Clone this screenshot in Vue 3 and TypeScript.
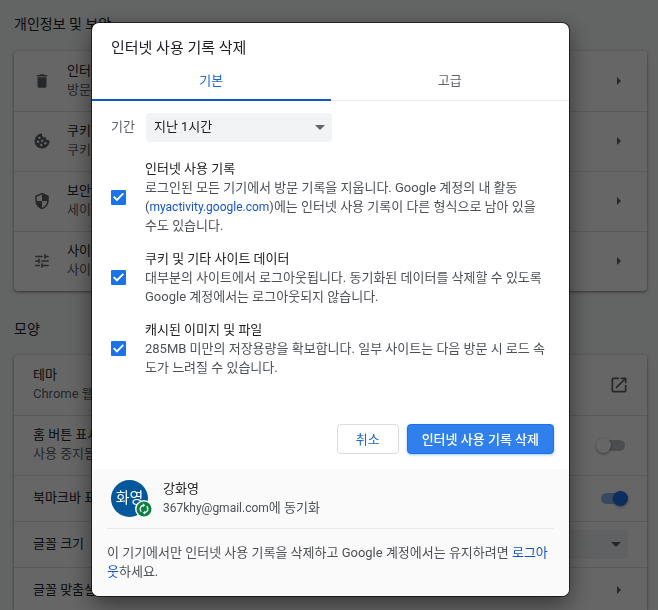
<script setup lang="ts">
import { ref } from 'vue'

type IconName = 'trash' | 'cookie' | 'shield' | 'tune'

interface PrivacyRow {
  icon: IconName
  title: string
  sub: string
}

const privacyRows: PrivacyRow[] = [
  { icon: 'trash', title: '인터넷 사용 기록 삭제', sub: '방문 기록, 쿠키, 캐시 등을 삭제합니다.' },
  { icon: 'cookie', title: '쿠키 및 기타 사이트 데이터', sub: '쿠키가 허용됨' },
  { icon: 'shield', title: '보안', sub: '세이프 브라우징 및 기타 보안 설정' },
  { icon: 'tune', title: '사이트 설정', sub: '사이트에서 사용할 수 있는 정보 관리' },
]

const period = ref('지난 1시간')
const periods = ['지난 1시간', '지난 24시간', '지난 7일', '지난 4주', '전체 기간']
const homeButton = ref(false)
const bookmarkBar = ref(true)
const history = ref(true)
const cookies = ref(true)
const cache = ref(true)
</script>

<template>
  <div class="page">
    <main class="settings">
      <h2 class="section-title">개인정보 및 보안</h2>
      <div class="card">
        <button v-for="row in privacyRows" :key="row.icon" type="button" class="row">
          <svg class="row-icon" viewBox="0 0 24 24" aria-hidden="true">
            <path v-if="row.icon === 'trash'" d="M6 19c0 1.1.9 2 2 2h8c1.1 0 2-.9 2-2V7H6v12zM19 4h-3.5l-1-1h-5l-1 1H5v2h14V4z" />
            <g v-else-if="row.icon === 'cookie'">
              <path d="M21.6 11.06a1 1 0 0 0-.86-.17A2.94 2.94 0 0 1 20 11c-1.65 0-3-1.35-3-2.94l.01-.17a1 1 0 0 0-1.25-1A2.96 2.96 0 0 1 15 7c-1.65 0-3-1.35-3-3 0-.22.03-.44.1-.72a1 1 0 0 0-1.07-1.23A9.96 9.96 0 0 0 2 12c0 5.51 4.49 10 10 10s10-4.49 10-10v-.16a1 1 0 0 0-.4-.78z" />
              <g fill="#fff">
                <circle cx="8.5" cy="7.8" r="1.6" />
                <circle cx="6.8" cy="13" r="1.6" />
                <circle cx="12.3" cy="11.8" r="1.6" />
                <circle cx="11" cy="17.3" r="1.6" />
                <circle cx="16.6" cy="15" r="1.6" />
              </g>
            </g>
            <path v-else-if="row.icon === 'shield'" d="M12 1L3 5v6c0 5.55 3.84 10.74 9 12 5.16-1.26 9-6.45 9-12V5l-9-4zm0 10.99h7c-.53 4.12-3.28 7.79-7 8.94V12H5V6.3l7-3.11v8.8z" />
            <path v-else d="M3 17v2h6v-2H3zM3 5v2h10V5H3zm10 16v-2h8v-2h-8v-2h-2v6h2zM7 9v2H3v2h4v2h2V9H7zm14 4v-2H11v2h10zm-6-4h2V7h4V5h-4V3h-2v6z" />
          </svg>
          <span class="row-text">
            <span class="row-title">{{ row.title }}</span>
            <span class="row-sub">{{ row.sub }}</span>
          </span>
          <span class="end"><svg class="caret" viewBox="0 0 4 8" aria-hidden="true"><path d="M0 0l4 4-4 4z" /></svg></span>
        </button>
      </div>

      <h2 class="section-title second">모양</h2>
      <div class="card">
        <a class="row" href="#theme">
          <span class="row-text">
            <span class="row-title">테마</span>
            <span class="row-sub">Chrome 웹 스토어 열기</span>
          </span>
          <span class="end">
            <svg class="open-icon" viewBox="0 0 24 24" aria-hidden="true"><path d="M19 19H5V5h7V3H5a2 2 0 0 0-2 2v14a2 2 0 0 0 2 2h14c1.1 0 2-.9 2-2v-7h-2v7zM14 3v2h3.59l-9.83 9.83 1.41 1.41L19 6.41V10h2V3h-7z" /></svg>
          </span>
        </a>
        <label class="row">
          <span class="row-text">
            <span class="row-title">홈 버튼 표시</span>
            <span class="row-sub">사용 중지됨</span>
          </span>
          <input v-model="homeButton" class="switch" type="checkbox" role="switch" />
        </label>
        <label class="row short">
          <span class="row-text"><span class="row-title">북마크바 표시</span></span>
          <input v-model="bookmarkBar" class="switch" type="checkbox" role="switch" />
        </label>
        <div class="row short">
          <label class="row-text" for="font-size"><span class="row-title">글꼴 크기</span></label>
          <span class="select-wrap">
            <select id="font-size"><option>중간(권장)</option></select>
            <svg class="drop" viewBox="0 0 10 5" aria-hidden="true"><path d="M0 0h10L5 5z" /></svg>
          </span>
        </div>
        <button type="button" class="row short">
          <span class="row-text"><span class="row-title">글꼴 맞춤설정</span></span>
          <span class="end"><svg class="caret" viewBox="0 0 4 8" aria-hidden="true"><path d="M0 0l4 4-4 4z" /></svg></span>
        </button>
      </div>
    </main>

    <div class="overlay">
      <section class="dialog" role="dialog" aria-modal="true" aria-labelledby="dialog-title">
        <h1 id="dialog-title" class="dialog-title">인터넷 사용 기록 삭제</h1>
        <div class="tabs" role="tablist">
          <button type="button" role="tab" aria-selected="true" class="tab active">기본</button>
          <button type="button" role="tab" aria-selected="false" class="tab">고급</button>
        </div>

        <div class="body">
          <div class="period">
            <label for="period">기간</label>
            <span class="select-wrap period-select">
              <select id="period" v-model="period">
                <option v-for="p in periods" :key="p">{{ p }}</option>
              </select>
              <svg class="drop" viewBox="0 0 10 5" aria-hidden="true"><path d="M0 0h10L5 5z" /></svg>
            </span>
          </div>

          <div class="items">
            <div class="item">
              <input id="history" v-model="history" class="check" type="checkbox" />
              <div class="item-text">
                <label for="history">인터넷 사용 기록</label>
                <p>로그인된 모든 기기에서 방문 기록을 지웁니다. Google 계정의 내 활동(<a class="address" href="#myactivity">myactivity.google.com</a>)에는 인터넷 사용 기록이 다른 형식으로 남아 있을 수도 있습니다.</p>
              </div>
            </div>
            <div class="item">
              <input id="cookies" v-model="cookies" class="check" type="checkbox" />
              <div class="item-text">
                <label for="cookies">쿠키 및 기타 사이트 데이터</label>
                <p>대부분의 사이트에서 로그아웃됩니다. 동기화된 데이터를 삭제할 수 있도록 Google 계정에서는 로그아웃되지 않습니다.</p>
              </div>
            </div>
            <div class="item">
              <input id="cache" v-model="cache" class="check" type="checkbox" />
              <div class="item-text">
                <label for="cache">캐시된 이미지 및 파일</label>
                <p>285MB 미만의 저장용량을 확보합니다. 일부 사이트는 다음 방문 시 로드 속도가 느려질 수 있습니다.</p>
              </div>
            </div>
          </div>
        </div>

        <div class="actions">
          <button type="button" class="btn">취소</button>
          <button type="button" class="btn primary">인터넷 사용 기록 삭제</button>
        </div>

        <footer class="footer">
          <div class="account">
            <span class="avatar">
              <span class="avatar-face">화영</span>
              <svg class="badge" viewBox="0 0 18 18" aria-hidden="true">
                <circle cx="9" cy="9" r="9" fill="#fafafa" />
                <circle cx="9" cy="9" r="7.5" fill="#0b8043" />
                <path d="M8 5.3A3.8 3.8 0 0 0 6.3 11.7M10 12.7A3.8 3.8 0 0 0 11.7 6.3" fill="none" stroke="#fff" stroke-width="1.3" />
                <path d="M7.8 3.3l2.4 2-2.4 2zM10.2 10.7v4l-2.4-2z" fill="#fff" />
              </svg>
            </span>
            <span class="who">
              <span class="name">강화영</span>
              <span class="mail"><span class="address">367khy@gmail.com</span>에 동기화</span>
            </span>
          </div>
          <p class="note">이 기기에서만 인터넷 사용 기록을 삭제하고 Google 계정에서는 유지하려면 <a href="#signout">로그아웃</a>하세요.</p>
        </footer>
      </section>
    </div>
  </div>
</template>

<style>
body {
  background: #f8f9fa;
}
</style>

<style scoped>
.page {
  height: 100vh;
  overflow: hidden;
  font-family: Roboto, 'Noto Sans CJK KR', sans-serif;
  font-size: 13px;
  line-height: 19px;
  color: #202124;
  background: #f8f9fa;
}

button,
select {
  font: inherit;
  color: inherit;
}

a {
  text-decoration: none;
}

.settings {
  padding: 14px 11px 0 14px;
}

.section-title {
  margin: 0 0 17px;
  font-size: 14px;
  line-height: 20px;
  font-weight: 400;
}

.section-title.second {
  margin: 28px 0 16px;
}

.card {
  background: #fff;
  border-radius: 4px;
  box-shadow: 0 1px 2px rgba(60, 64, 67, 0.4), 0 1px 3px 1px rgba(60, 64, 67, 0.2);
}

.row {
  box-sizing: border-box;
  display: flex;
  align-items: center;
  width: 100%;
  height: 60px;
  padding: 0 19px 1px;
  border: 0;
  border-top: 1px solid #e0e2e5;
  background: none;
  color: inherit;
  text-align: left;
}

.row:first-child {
  border-top-color: transparent;
}

.row.short {
  height: 46px;
}

.row-icon {
  width: 18px;
  height: 18px;
  margin-right: 16px;
  fill: #5f6368;
}

.row-text {
  display: flex;
  flex: 1;
  flex-direction: column;
  padding-bottom: 2px;
}

.row-sub {
  color: #5f6368;
}

.end {
  display: flex;
  justify-content: center;
  width: 18px;
}

.caret {
  width: 4px;
  height: 8px;
  fill: #5f6368;
}

.open-icon {
  flex: none;
  width: 20px;
  height: 20px;
  fill: #5f6368;
}

.switch {
  display: flex;
  align-items: center;
  box-sizing: border-box;
  width: 24px;
  height: 11px;
  margin: 0 3px;
  border-radius: 6px;
  appearance: none;
  background: #bdc1c6;
}

.switch::before {
  content: '';
  flex: none;
  width: 15px;
  height: 15px;
  margin-left: -5px;
  border-radius: 50%;
  background: #fff;
  box-shadow: 0 1px 3px rgba(0, 0, 0, 0.4);
}

.switch:checked {
  background: #8cb8f3;
}

.switch:checked::before {
  margin-left: 12px;
  background: #1a73e8;
}

.select-wrap {
  display: grid;
  align-items: center;
  width: 186px;
}

.select-wrap > * {
  grid-area: 1 / 1;
}

.select-wrap select {
  width: 100%;
  height: 29px;
  padding: 0 8px 2px;
  border: 0;
  border-radius: 4px;
  appearance: none;
  background: #f1f3f4;
}

.drop {
  justify-self: end;
  width: 10px;
  height: 5px;
  margin-right: 7px;
  fill: #5f6368;
  pointer-events: none;
}

.overlay {
  position: fixed;
  inset: 0;
  display: flex;
  align-items: flex-start;
  justify-content: center;
  padding: 23px 0 0 3px;
  background: rgba(0, 0, 0, 0.6);
}

.dialog {
  width: 477px;
  overflow: hidden;
  border-radius: 7px;
  background: #fff;
  box-shadow: 0 0 0 1px rgba(0, 0, 0, 0.6), 0 8px 24px rgba(0, 0, 0, 0.5);
}

.dialog-title {
  margin: 0;
  padding: 15px 19px 9px;
  font-size: 15px;
  line-height: 20px;
  font-weight: 400;
}

.tabs {
  display: flex;
  box-shadow: inset 0 -1px #e8eaed;
}

.tab {
  flex: 1;
  height: 34px;
  padding: 0 0 6px;
  border: 0;
  border-bottom: 2px solid transparent;
  background: none;
  color: #5f6368;
}

.tab.active {
  border-bottom-color: #1158c7;
  color: #1967d2;
}

.body {
  padding: 12px 19px 0;
}

.period {
  display: flex;
  align-items: center;
  gap: 11px;
  color: #5f6368;
}

.period > label {
  padding-bottom: 2px;
}

.period-select {
  color: #202124;
}

.items {
  display: flex;
  flex-direction: column;
  gap: 14px;
  margin-top: 17px;
}

.item {
  display: flex;
  align-items: center;
  gap: 19px;
}

.item-text {
  flex: 1;
}

.item-text label {
  display: block;
}

.item-text p {
  margin: 0;
  color: #4d5156;
}

.item-text a,
.note a {
  color: #1554c8;
}

.address {
  font-size: 12px;
  line-height: 1;
}

.check {
  display: grid;
  place-items: center;
  flex: none;
  width: 15px;
  height: 15px;
  margin: 0;
  border-radius: 1px;
  appearance: none;
  background: #1a73e8;
}

.check::before {
  content: '';
  width: 11px;
  height: 9px;
  background: #fff;
  clip-path: polygon(0 52%, 12% 38%, 36% 66%, 88% 4%, 100% 18%, 36% 96%);
}

.actions {
  display: flex;
  justify-content: flex-end;
  gap: 8px;
  padding: 47px 15px 15px;
}

.btn {
  height: 30px;
  padding: 0 18px;
  border: 1px solid #dadce0;
  border-radius: 4px;
  background: #fff;
  color: #1967d2;
}

.btn.primary {
  padding: 0 14px;
  border-color: #1a73e8;
  background: #2f80ed;
  color: #fff;
  font-weight: 500;
  box-shadow: 0 1px 3px rgba(26, 115, 232, 0.4);
}

.footer {
  padding: 10px 15px 15px;
  background: #fafafa;
}

.account {
  display: flex;
  align-items: center;
  gap: 15px;
  padding: 0 4px 11px;
  border-bottom: 1px solid #e8eaed;
}

.avatar {
  position: relative;
}

.avatar-face {
  display: grid;
  place-items: center;
  width: 37px;
  height: 37px;
  border-radius: 50%;
  background: #01579b;
  color: #fff;
  font-size: 15px;
}

.badge {
  position: absolute;
  right: -5px;
  bottom: -1px;
  width: 18px;
  height: 18px;
}

.who {
  display: flex;
  flex-direction: column;
}

.mail {
  color: #4d5156;
}

.note {
  margin: 14px 0 0;
  color: #4d5156;
}
</style>
